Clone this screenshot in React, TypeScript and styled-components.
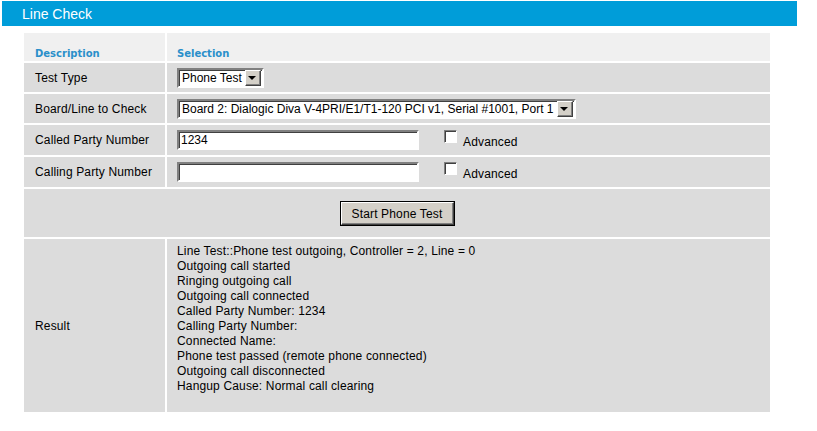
import { FC } from "react";
import styled, { createGlobalStyle } from "styled-components";

const GlobalStyle = createGlobalStyle`
  body {
    margin: 0;
    background: #fff;
    font-family: "Liberation Sans", Arial, sans-serif;
    font-size: 12px;
    letter-spacing: 0.15px;
    color: #000;
  }
`;

const Page = styled.div`
  padding: 1px 20px 0 2px;
`;

const TitleBar = styled.div`
  width: 795px;
  height: 25px;
  background: #009dd9;
  color: #fff;
  font-size: 14px;
  letter-spacing: 0;
  display: flex;
  align-items: center;
  padding-left: 20px;
  box-sizing: border-box;
`;

const Table = styled.table`
  margin: 5px 0 0 20px;
  width: 750px;
  border-collapse: separate;
  border-spacing: 2px;
`;

const HeadCell = styled.th<{ $wide?: boolean }>`
  background: #f0f0f0;
  height: 28px;
  padding: 0 0 2px ${(p) => (p.$wide ? 10 : 11)}px;
  box-sizing: border-box;
  text-align: left;
  vertical-align: bottom;
  font-family: "DejaVu Sans", Verdana, sans-serif;
  font-size: 10px;
  letter-spacing: 0;
  font-weight: bold;
  color: #2a8fca;
  width: ${(p) => (p.$wide ? "auto" : "141px")};
`;

const Row = styled.tr<{ $h: number }>`
  height: ${(p) => p.$h}px;
`;

const Label = styled.td`
  background: #dcdcdc;
  padding: 0 0 0 11px;
  vertical-align: middle;
`;

const Value = styled.td<{ $top?: boolean }>`
  background: #dcdcdc;
  padding: ${(p) => (p.$top ? "5px 0 0 10px" : "0 0 0 10px")};
  vertical-align: ${(p) => (p.$top ? "top" : "middle")};
`;

const ButtonCell = styled.td`
  background: #dcdcdc;
  text-align: center;
  vertical-align: middle;
  padding-top: 2px;
`;

const FieldLine = styled.div`
  display: flex;
  align-items: center;
`;

const SelectBox = styled.div`
  display: inline-flex;
  align-items: center;
  height: 20px;
  box-sizing: border-box;
  background: #fff;
  border: 2px solid;
  border-color: #808080 #fff #fff #808080;
  box-shadow: inset 1px 1px 0 #404040;
  padding: 0 1px 0 3px;
  gap: 3px;
  white-space: nowrap;
  letter-spacing: 0;
`;

const ArrowButton = styled.span`
  width: 16px;
  height: 16px;
  box-sizing: border-box;
  background: #d4d0c8;
  border: 1px solid;
  border-color: #fff #404040 #404040 #fff;
  box-shadow: inset -1px -1px 0 #808080;
  display: flex;
  align-items: center;
  justify-content: center;

  &::after {
    content: "";
    border-left: 4px solid transparent;
    border-right: 4px solid transparent;
    border-top: 4px solid #000;
    margin: 1px 1px 0 0;
  }
`;

const TextInput = styled.div`
  width: 242px;
  height: 20px;
  box-sizing: border-box;
  background: #fff;
  border: 2px solid;
  border-color: #808080 #fff #fff #808080;
  box-shadow: inset 1px 1px 0 #404040;
  padding: 0 2px;
  display: flex;
  align-items: center;
  letter-spacing: 0;
`;

const Check = styled.span`
  width: 13px;
  height: 13px;
  box-sizing: border-box;
  background: #fff;
  border: 1px solid;
  border-color: #808080 #fff #fff #808080;
  box-shadow: inset 1px 1px 0 #404040;
  margin: -8px 6px 0 25px;
`;

const CheckLabel = styled.span`
  margin-top: 3px;
`;

const Button = styled.button`
  width: 113px;
  height: 23px;
  background: #d4d0c8;
  font-family: "Liberation Sans", Arial, sans-serif;
  font-size: 12px;
  letter-spacing: 0.15px;
  color: #000;
  border: 1px solid;
  border-color: #fff #404040 #404040 #fff;
  box-shadow: inset -1px -1px 0 #808080, 0 0 0 1px #000;
  padding: 0;
`;

const Log = styled.div`
  line-height: 15px;
`;

const Select: FC<{ value: string }> = ({ value }) => (
  <SelectBox>
    <span>{value}</span>
    <ArrowButton />
  </SelectBox>
);

const logLines = [
  "Line Test::Phone test outgoing, Controller = 2, Line = 0",
  "Outgoing call started",
  "Ringing outgoing call",
  "Outgoing call connected",
  "Called Party Number: 1234",
  "Calling Party Number:",
  "Connected Name:",
  "Phone test passed (remote phone connected)",
  "Outgoing call disconnected",
  "Hangup Cause: Normal call clearing",
];

const App: FC = () => {
  return (
    <Page>
      <GlobalStyle />
      <TitleBar>Line Check</TitleBar>
      <Table>
        <tbody>
          <tr>
            <HeadCell>Description</HeadCell>
            <HeadCell $wide>Selection</HeadCell>
          </tr>
          <Row $h={29}>
            <Label>Test Type</Label>
            <Value>
              <Select value="Phone Test" />
            </Value>
          </Row>
          <Row $h={29}>
            <Label>Board/Line to Check</Label>
            <Value>
              <Select value="Board 2: Dialogic Diva V-4PRI/E1/T1-120 PCI v1, Serial #1001, Port 1" />
            </Value>
          </Row>
          <Row $h={30}>
            <Label>Called Party Number</Label>
            <Value>
              <FieldLine>
                <TextInput>1234</TextInput>
                <Check />
                <CheckLabel>Advanced</CheckLabel>
              </FieldLine>
            </Value>
          </Row>
          <Row $h={30}>
            <Label>Calling Party Number</Label>
            <Value>
              <FieldLine>
                <TextInput />
                <Check />
                <CheckLabel>Advanced</CheckLabel>
              </FieldLine>
            </Value>
          </Row>
          <Row $h={48}>
            <ButtonCell colSpan={2}>
              <Button>Start Phone Test</Button>
            </ButtonCell>
          </Row>
          <Row $h={173}>
            <Label>Result</Label>
            <Value $top>
              <Log>
                {logLines.map((line) => (
                  <div key={line}>{line}</div>
                ))}
              </Log>
            </Value>
          </Row>
        </tbody>
      </Table>
    </Page>
  );
};

export default App;
